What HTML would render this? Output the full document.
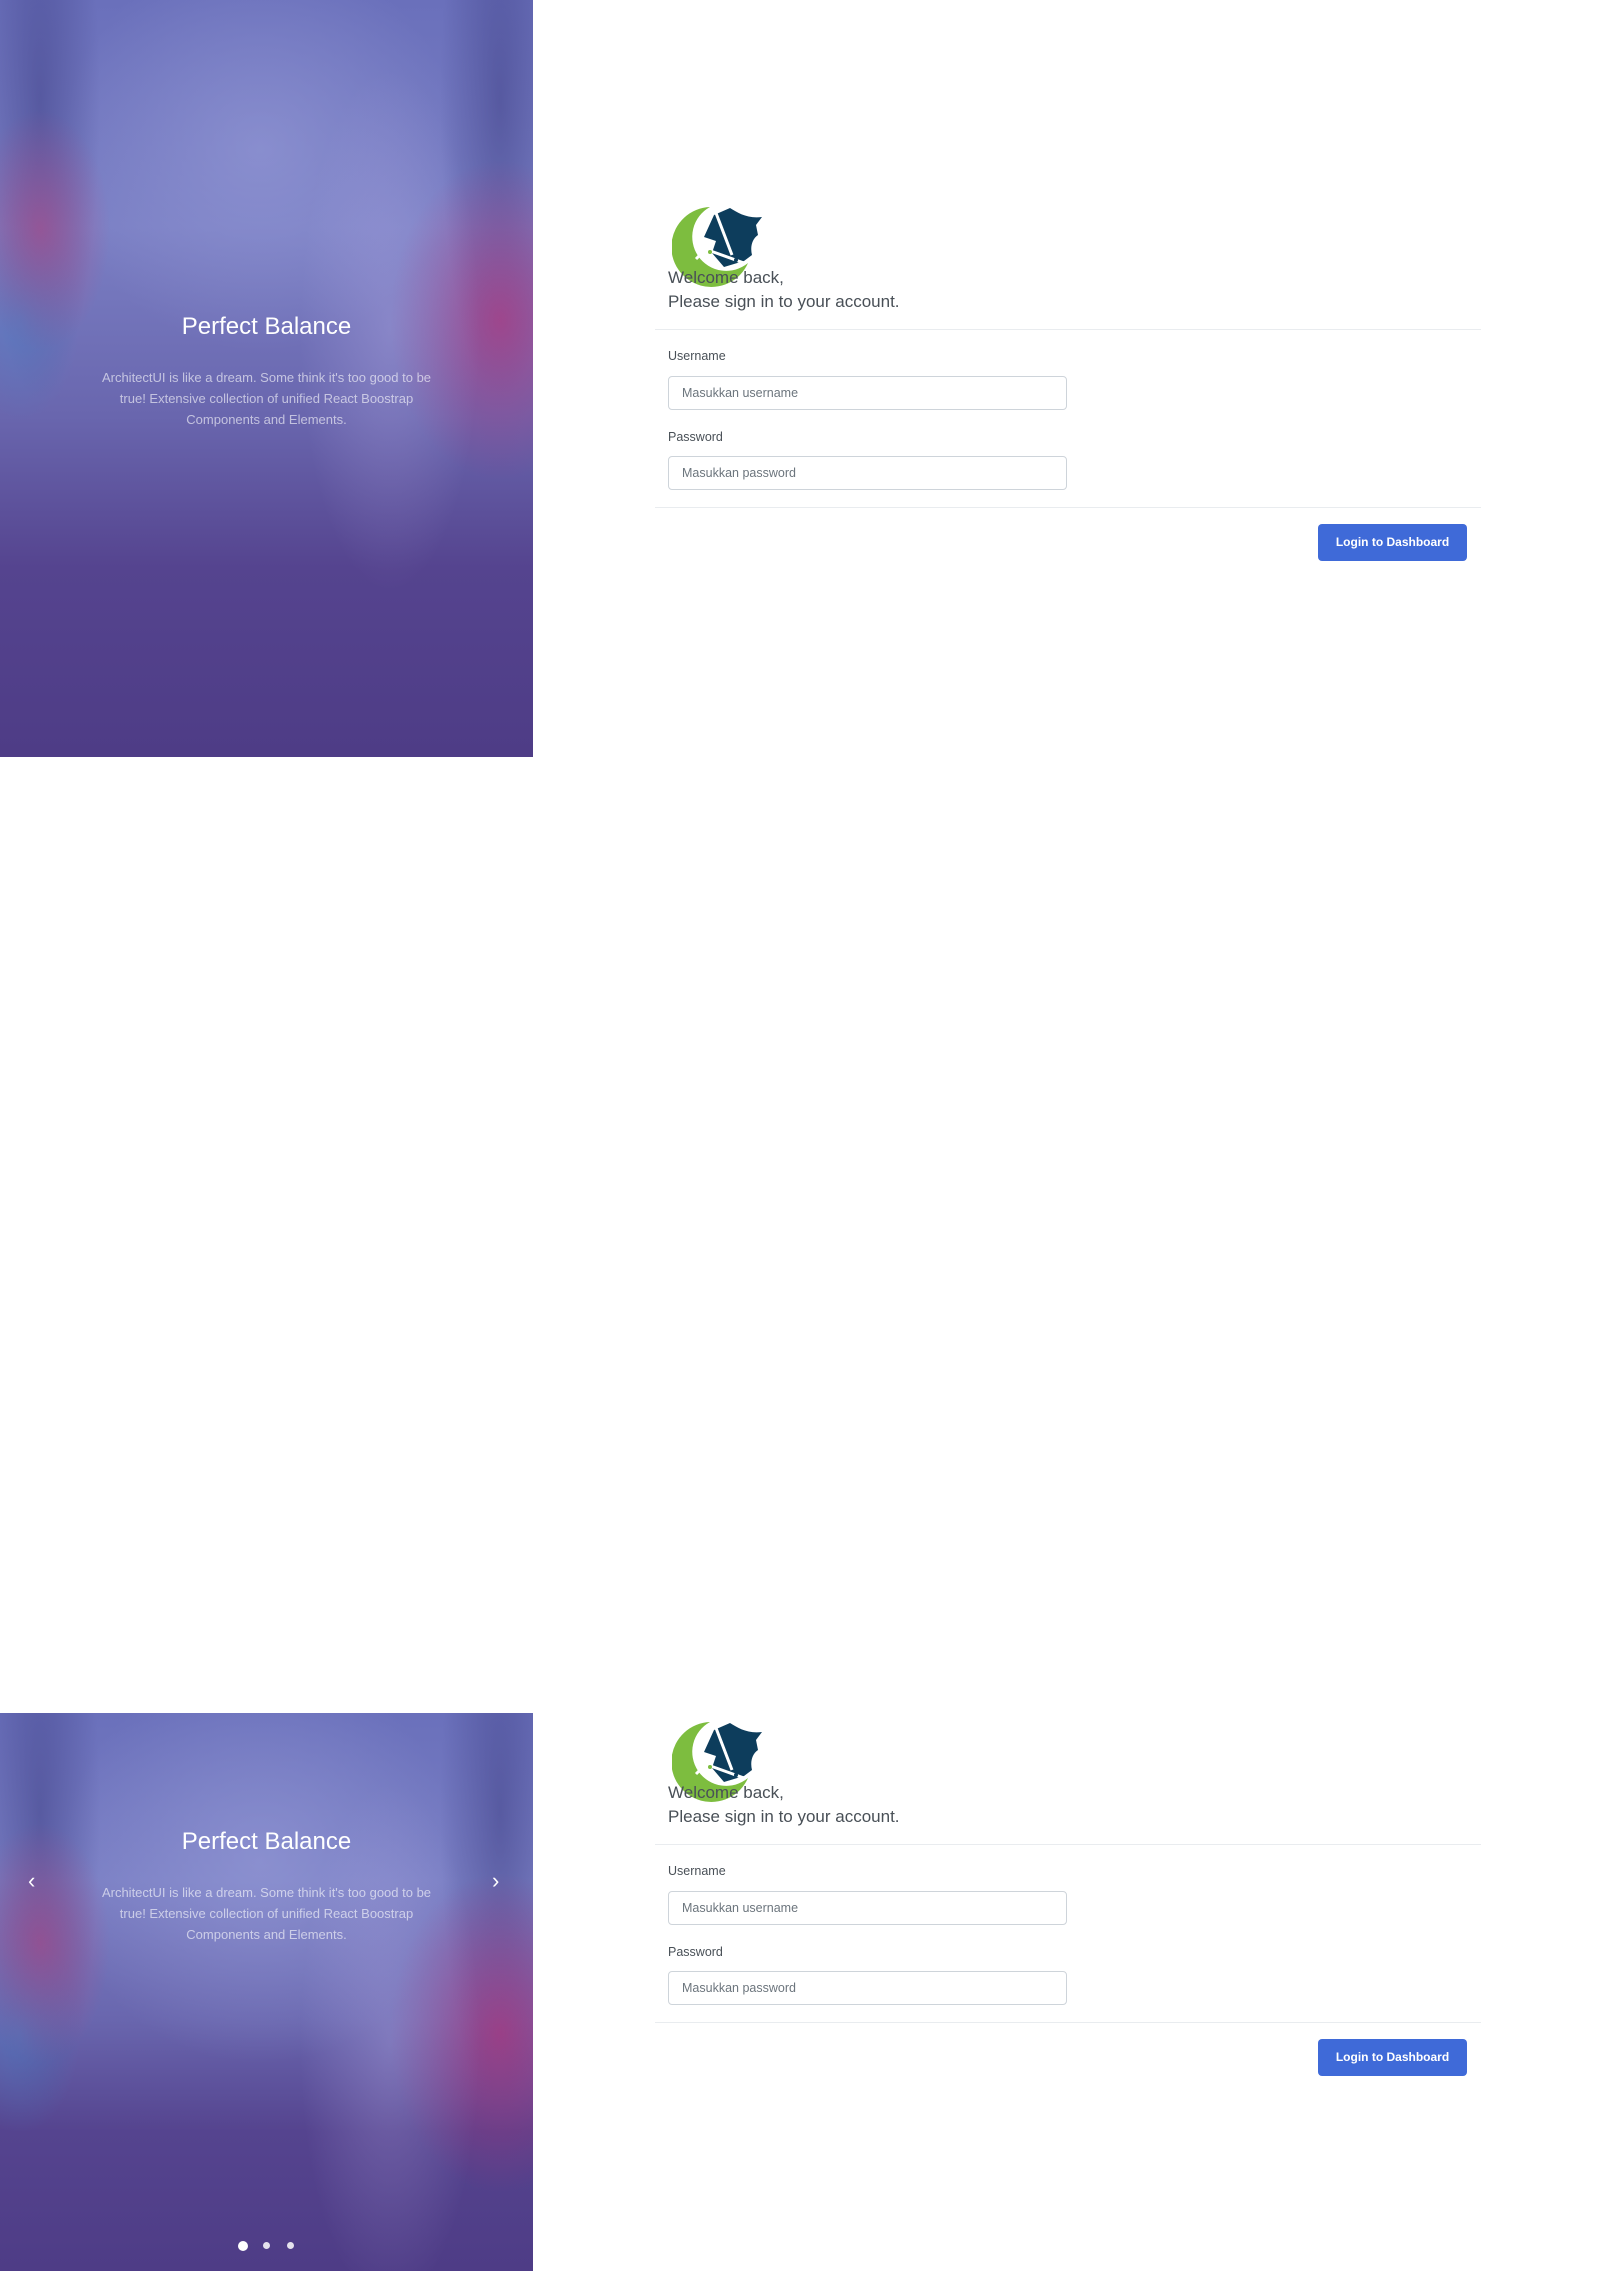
<!DOCTYPE html>
<html><head><meta charset="utf-8"><style>
*{box-sizing:border-box;margin:0;padding:0}
body{width:1600px;height:2271px;background:#fff;font-family:"Liberation Sans",sans-serif;position:relative;overflow:hidden;color:#495057}
.panel{position:absolute;left:0;width:533px;overflow:hidden;
background:
radial-gradient(ellipse 90px 260px at 390px 330px,rgba(190,180,235,.3),transparent),
radial-gradient(ellipse 110px 160px at 500px 320px,rgba(200,40,110,.55),transparent),
radial-gradient(ellipse 70px 120px at 40px 230px,rgba(200,60,120,.45),transparent),
radial-gradient(ellipse 60px 100px at 20px 320px,rgba(70,130,200,.45),transparent),
radial-gradient(ellipse 60px 300px at 40px 100px,rgba(60,60,130,.5),transparent),
radial-gradient(ellipse 60px 300px at 500px 100px,rgba(60,60,130,.5),transparent),
radial-gradient(ellipse 200px 200px at 260px 150px,rgba(150,155,215,.6),transparent),
linear-gradient(180deg,#6a70bb 0%,#7a7fc4 30%,#6966ae 55%,#55448f 75%,#4e3c86 100%)}
.panel .t{position:absolute;left:0;width:533px;text-align:center;color:#fff;font-size:24px}
.panel .p{position:absolute;left:96px;width:341px;text-align:center;color:rgba(255,255,255,.6);font-size:13px;line-height:21px}
.form{position:absolute;left:0;top:0;width:1600px}
.lbl{position:absolute;left:668px;font-size:12.5px;color:#495057}
.inp{position:absolute;left:668px;width:399px;height:34px;border:1px solid #ced4da;border-radius:4px;font-size:12.5px;color:#6c757d;padding:9px 13px}
.hr{position:absolute;left:655px;width:826px;height:1px;background:#e9ecef}
.btn{position:absolute;left:1318px;width:149px;height:37px;background:#3f6ad8;border-radius:4px;color:#fff;font-size:12px;font-weight:bold;text-align:center;line-height:37px}
.wel{position:absolute;left:668px;font-size:17px;line-height:24px;color:#495057}
</style></head><body>

<div class="panel" style="top:0;height:757px">
<div class="t" style="top:313px">Perfect Balance</div>
<div class="p" style="top:367px">ArchitectUI is like a dream. Some think it's too good to be true! Extensive collection of unified React Boostrap Components and Elements.</div>
</div>

<div class="panel" style="top:1713px;height:558px">
<div class="t" style="top:115px">Perfect Balance</div>
<div class="p" style="top:169px">ArchitectUI is like a dream. Some think it's too good to be true! Extensive collection of unified React Boostrap Components and Elements.</div>
<div style="position:absolute;left:28px;top:155px;color:#fff;font-size:22px">‹</div>
<div style="position:absolute;left:492px;top:155px;color:#fff;font-size:22px">›</div>
<div style="position:absolute;left:238px;top:528px;width:10px;height:10px;border-radius:50%;background:#fff"></div>
<div style="position:absolute;left:263px;top:529px;width:7px;height:7px;border-radius:50%;background:rgba(255,255,255,.85)"></div>
<div style="position:absolute;left:287px;top:529px;width:7px;height:7px;border-radius:50%;background:rgba(255,255,255,.85)"></div>
</div>

<div class="form" style="top:0">
<svg style="position:absolute;left:672px;top:205px" width="92" height="82" viewBox="0 0 92 82">
<path d="M38 2 A40 40 0 1 0 76 58 A34 34 0 1 1 38 2Z" fill="#7dbd3f"/>
<path d="M42 10 L58 3 C66 8 76 14 90 12 L84 20 L86 30 C80 34 78 42 80 50 L72 56 L52 62 L40 48 L44 36 L32 32Z" fill="#0d3d5c"/>
<path d="M44 8 L60 50 M33 44 L72 58 M24 54 L34 44" stroke="#fff" stroke-width="3" fill="none"/>
<circle cx="38" cy="47" r="2" fill="#7dbd3f"/><circle cx="64" cy="55" r="2" fill="#0d3d5c"/>
</svg>
<div class="wel" style="top:266px">Welcome back,<br>Please sign in to your account.</div>
<div class="hr" style="top:329px"></div>
<div class="lbl" style="top:349px">Username</div>
<div class="inp" style="top:376px">Masukkan username</div>
<div class="lbl" style="top:430px">Password</div>
<div class="inp" style="top:456px">Masukkan password</div>
<div class="hr" style="top:507px"></div>
<div class="btn" style="top:524px">Login to Dashboard</div>
</div>

<div class="form" style="top:1515px">
<svg style="position:absolute;left:672px;top:205px" width="92" height="82" viewBox="0 0 92 82">
<path d="M38 2 A40 40 0 1 0 76 58 A34 34 0 1 1 38 2Z" fill="#7dbd3f"/>
<path d="M42 10 L58 3 C66 8 76 14 90 12 L84 20 L86 30 C80 34 78 42 80 50 L72 56 L52 62 L40 48 L44 36 L32 32Z" fill="#0d3d5c"/>
<path d="M44 8 L60 50 M33 44 L72 58 M24 54 L34 44" stroke="#fff" stroke-width="3" fill="none"/>
<circle cx="38" cy="47" r="2" fill="#7dbd3f"/><circle cx="64" cy="55" r="2" fill="#0d3d5c"/>
</svg>
<div class="wel" style="top:266px">Welcome back,<br>Please sign in to your account.</div>
<div class="hr" style="top:329px"></div>
<div class="lbl" style="top:349px">Username</div>
<div class="inp" style="top:376px">Masukkan username</div>
<div class="lbl" style="top:430px">Password</div>
<div class="inp" style="top:456px">Masukkan password</div>
<div class="hr" style="top:507px"></div>
<div class="btn" style="top:524px">Login to Dashboard</div>
</div>
</body></html>
